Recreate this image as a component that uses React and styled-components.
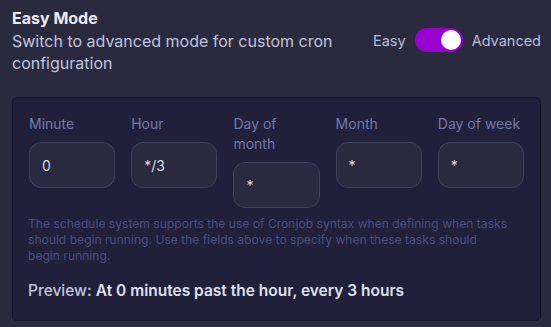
import React, { useState } from "react";
import styled, { createGlobalStyle } from "styled-components";

const Global = createGlobalStyle`
  html, body { margin: 0; padding: 0; background: #2a2a3f; }
  body { font-family: Inter, "Noto Sans", sans-serif; -webkit-font-smoothing: antialiased; }
`;

const Page = styled.div`
  width: 551px;
  height: 327px;
  box-sizing: border-box;
  padding: 6px 10px 0 12px;
  background: #2a2a3f;
  overflow: hidden;
`;

const Header = styled.div`
  display: flex;
  align-items: center;
  gap: 24px;
`;

const HeaderText = styled.div`
  flex: 1;
  min-width: 0;
`;

const Title = styled.div`
  font-size: 16px;
  line-height: 24px;
  font-weight: 700;
  color: #ebebf3;
`;

const Subtitle = styled.div`
  font-size: 16px;
  line-height: 22px;
  color: #c0c4dc;
`;

const ToggleGroup = styled.div`
  display: flex;
  align-items: center;
  gap: 9px;
  font-size: 14.5px;
  color: #b9bdd6;
`;

const Switch = styled.button`
  position: relative;
  width: 48px;
  height: 24px;
  border: none;
  padding: 0;
  border-radius: 12px;
  background: ${(p) => (p.$on ? "#9700ce" : "#4a4b66")};
  cursor: pointer;
`;

const Knob = styled.span`
  position: absolute;
  top: 2px;
  left: ${(p) => (p.$on ? "26px" : "2px")};
  width: 20px;
  height: 20px;
  border-radius: 50%;
  background: #ffffff;
`;

const Panel = styled.div`
  margin-top: 23px;
  box-sizing: border-box;
  height: 224px;
  border: 1px solid #15152a;
  border-radius: 5px;
  background: #20203a;
  padding: 16px 16px 16px 16px;
`;

const Fields = styled.div`
  display: grid;
  grid-template-columns: repeat(5, 1fr);
  gap: 16px;
  align-items: start;
`;

const Field = styled.label`
  display: flex;
  flex-direction: column;
`;

const Label = styled.span`
  font-size: 14px;
  line-height: 20px;
  color: #7179ac;
  margin-bottom: 8px;
`;

const Input = styled.input`
  box-sizing: border-box;
  width: 100%;
  height: 46px;
  padding: 0 12px;
  border: 1px solid #40415b;
  border-radius: 12px;
  background: #29293f;
  color: #d8dbef;
  font-family: inherit;
  font-size: 14px;
  outline: none;
`;

const Help = styled.p`
  margin: 8px 0 0 -1px;
  font-size: 12.1px;
  line-height: 16px;
  color: #4a4f7f;
`;

const Preview = styled.p`
  margin: 15px 0 0 -1px;
  font-size: 15.5px;
  line-height: 24px;
  font-weight: 500;
  color: #c1c5db;
`;

const Strong = styled.span`
  font-weight: 600;
  color: #dfe1ee;
`;

const fields = [
  ["Minute", "0"],
  ["Hour", "*/3"],
  ["Day of month", "*"],
  ["Month", "*"],
  ["Day of week", "*"],
];

export default function App() {
  const [on, setOn] = useState(true);
  return (
    <Page>
      <Global />
      <Header>
        <HeaderText>
          <Title>Easy Mode</Title>
          <Subtitle>Switch to advanced mode for custom cron configuration</Subtitle>
        </HeaderText>
        <ToggleGroup>
          <span>Easy</span>
          <Switch $on={on} onClick={() => setOn(!on)} aria-label="Toggle mode">
            <Knob $on={on} />
          </Switch>
          <span>Advanced</span>
        </ToggleGroup>
      </Header>
      <Panel>
        <Fields>
          {fields.map(([label, value]) => (
            <Field key={label}>
              <Label>{label}</Label>
              <Input defaultValue={value} />
            </Field>
          ))}
        </Fields>
        <Help>
          The schedule system supports the use of Cronjob syntax when defining when tasks
          should begin running. Use the fields above to specify when these tasks should
          <br />
          begin running.
        </Help>
        <Preview>
          Preview: <Strong>At 0 minutes past the hour, every 3 hours</Strong>
        </Preview>
      </Panel>
    </Page>
  );
}
